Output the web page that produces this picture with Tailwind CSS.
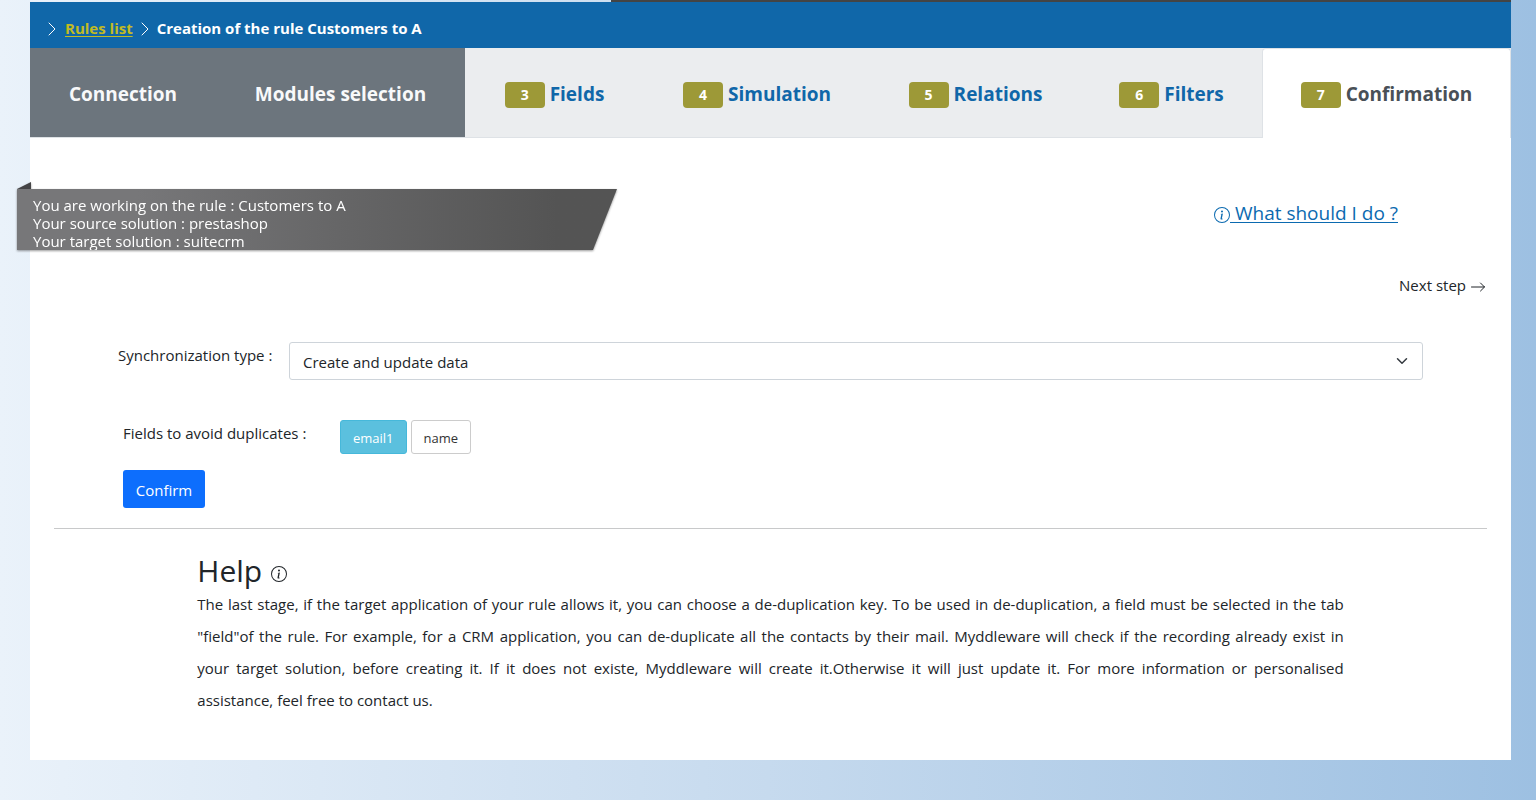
<!DOCTYPE html>
<html lang="en">
<head>
<meta charset="utf-8">
<meta name="viewport" content="width=device-width, initial-scale=1">
<title>Creation of the rule Customers to A</title>
<script src="https://cdn.jsdelivr.net/npm/@tailwindcss/browser@4"></script>
</head>
<body class="min-h-screen bg-linear-to-r from-[#eaf2fa] via-[#c6daee] to-[#9dc0e2] pr-[25px] pb-10 pl-[30px] font-['Open_Sans','Noto_Sans',sans-serif] text-[15px] leading-6 text-[#212529]">
<div class="flex h-[2px] justify-end"><div class="w-[900px] bg-[#444444]"></div></div>
<div class="bg-white pb-11">
  <nav aria-label="Breadcrumb" class="flex h-[46px] items-center bg-[#1067a9] pt-[5px] pl-[14px] font-bold text-white">
    <svg class="mt-[3px] mr-[5px] size-4" viewBox="0 0 16 16" fill="none" stroke="currentColor" stroke-linecap="round" stroke-linejoin="round"><path d="M5 2l6 6-6 6"/></svg>
    <a href="#" class="text-[#c2bb22] underline underline-offset-2">Rules list</a>
    <svg class="mx-1 mt-[3px] size-4" viewBox="0 0 16 16" fill="none" stroke="currentColor" stroke-linecap="round" stroke-linejoin="round"><path d="M5 2l6 6-6 6"/></svg>
    <span>Creation of the rule Customers to A</span>
  </nav>

  <div role="tablist" class="grid h-[90px] grid-cols-[186fr_249fr_179fr_226fr_211fr_181fr_249fr] border-b border-[#dee2e6] bg-[#ebedef] text-[19px] font-bold whitespace-nowrap text-[#1067a9]">
    <button role="tab" class="bg-[#6c757d] pt-[3px] text-[#f8f9fa]">Connection</button>
    <button role="tab" class="bg-[#6c757d] pt-[3px] text-[#f8f9fa]">Modules selection</button>
    <button role="tab" class="flex items-center justify-center gap-[5px] pt-[5px]"><span class="h-[26px] w-10 rounded bg-[#9d9937] text-sm leading-[26px] text-white">3</span><span class="pb-[2px]">Fields</span></button>
    <button role="tab" class="flex items-center justify-center gap-[5px] pt-[5px]"><span class="h-[26px] w-10 rounded bg-[#9d9937] text-sm leading-[26px] text-white">4</span><span class="pb-[2px]">Simulation</span></button>
    <button role="tab" class="flex items-center justify-center gap-[5px] pt-[5px]"><span class="h-[26px] w-10 rounded bg-[#9d9937] text-sm leading-[26px] text-white">5</span><span class="pb-[2px]">Relations</span></button>
    <button role="tab" class="flex items-center justify-center gap-[5px] pt-[5px]"><span class="h-[26px] w-10 rounded bg-[#9d9937] text-sm leading-[26px] text-white">6</span><span class="pb-[2px]">Filters</span></button>
    <button role="tab" aria-selected="true" class="-mb-px flex items-center justify-center gap-[5px] rounded-t border border-b-0 border-[#dee2e6] bg-white pt-[3px] text-[#495057]"><span class="h-[26px] w-10 rounded bg-[#9d9937] text-sm leading-[26px] text-white">7</span><span class="pb-[2px]">Confirmation</span></button>
  </div>

  <div class="mt-[44px] flex items-start justify-between pr-[113px]">
    <div class="-ml-[13px] w-[600px] drop-shadow-[0_1px_1px_rgba(0,0,0,0.4)]">
      <div class="h-[7px] w-[14px] bg-[#444446] [clip-path:polygon(0_100%,100%_0,100%_100%)]"></div>
      <p class="h-[61px] bg-linear-to-r from-[#777779] from-20% to-[#545454] to-90% pt-[7px] pl-4 leading-[18px] text-white [clip-path:polygon(0_0,100%_0,96%_100%,0_100%)]">You are working on the rule : Customers to A<br>Your source solution : prestashop<br>Your target solution : suitecrm</p>
    </div>
    <a href="#" class="mt-[17px] flex items-center text-[19px] leading-7 text-[#0b6ab0]">
      <svg class="mt-[3px] size-4" viewBox="0 0 16 16" fill="currentColor"><path d="M8 15A7 7 0 1 1 8 1a7 7 0 0 1 0 14m0 1A8 8 0 1 0 8 0a8 8 0 0 0 0 16"/><path d="m8.93 6.588-2.29.287-.082.38.45.083c.294.07.352.176.288.469l-.738 3.468c-.194.897.105 1.319.808 1.319.545 0 1.178-.252 1.465-.598l.088-.416c-.2.176-.492.246-.686.246-.275 0-.375-.193-.304-.533zM9 4.5a1 1 0 1 1-2 0 1 1 0 0 1 2 0"/></svg>
      <span class="whitespace-pre underline underline-offset-2"> What should I do ?</span>
    </a>
  </div>

  <div class="mt-[23px] flex justify-end pr-[25px]">
    <a href="#" class="flex items-center gap-1">Next step <svg class="mt-[3px] size-4" viewBox="0 0 16 16" fill="none" stroke="currentColor" stroke-linecap="round" stroke-linejoin="round"><path d="M1.5 8h13M10.5 4l4 4-4 4"/></svg></a>
  </div>

  <form class="px-[88px]">
    <div class="mt-[45px] flex items-start">
      <label for="sync" class="mt-px w-[171px] shrink-0 whitespace-nowrap">Synchronization type :</label>
      <div class="relative grow">
        <select id="sync" class="h-[38px] w-full appearance-none rounded-[3px] border border-[#ced4da] bg-white pt-px pl-[13px]"><option>Create and update data</option></select>
        <svg class="pointer-events-none absolute top-[13px] right-[15px] size-3" viewBox="0 0 16 16" fill="none" stroke="#343a40" stroke-width="2" stroke-linecap="round" stroke-linejoin="round"><path d="m2 5 6 6 6-6"/></svg>
      </div>
    </div>
    <div class="mt-10 flex items-start pl-[5px]">
      <span class="mt-px w-[217px] whitespace-nowrap">Fields to avoid duplicates :</span>
      <div class="flex gap-1 text-[13px]">
        <button type="button" aria-pressed="true" class="h-[34px] rounded-[3px] border border-[#46b8da] bg-[#5bc0de] px-3 pt-px text-white">email1</button>
        <button type="button" aria-pressed="false" class="h-[34px] rounded-[3px] border border-[#cccccc] bg-white px-3 pt-px text-[#333333]">name</button>
      </div>
    </div>
    <button type="submit" class="mt-4 ml-[5px] h-[38px] w-[82px] rounded-[3px] bg-[#0d6efd] pt-px text-white">Confirm</button>
  </form>

  <div class="px-6">
    <hr class="mt-5 border-[#c8c9ca]">
    <section class="mx-auto mt-6 w-4/5">
      <h2 class="flex items-center gap-[9px] text-[30px] leading-[35px]">Help <svg class="mt-[6px] size-4" viewBox="0 0 16 16" fill="currentColor"><path d="M8 15A7 7 0 1 1 8 1a7 7 0 0 1 0 14m0 1A8 8 0 1 0 8 0a8 8 0 0 0 0 16"/><path d="m8.93 6.588-2.29.287-.082.38.45.083c.294.07.352.176.288.469l-.738 3.468c-.194.897.105 1.319.808 1.319.545 0 1.178-.252 1.465-.598l.088-.416c-.2.176-.492.246-.686.246-.275 0-.375-.193-.304-.533zM9 4.5a1 1 0 1 1-2 0 1 1 0 0 1 2 0"/></svg></h2>
      <p class="text-justify leading-8">The last stage, if the target application of your rule allows it, you can choose a de-duplication key. To be used in de-duplication, a field must be selected in the tab "field"of the rule. For example, for a CRM application, you can de-duplicate all the contacts by their mail. Myddleware will check if the recording already exist in your&nbsp;target solution, before creating it. If it does not existe, Myddleware will create it.Otherwise it will just update it. For more information or personalised assistance, feel free to contact us.</p>
    </section>
  </div>
</div>
</body>
</html>
